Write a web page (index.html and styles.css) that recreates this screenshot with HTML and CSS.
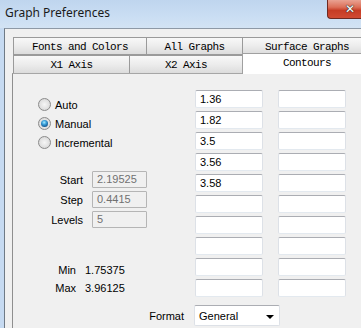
FILE: index.html
```html
<!DOCTYPE html>
<html>
<head>
<meta charset="utf-8">
<link rel="stylesheet" href="styles.css">
</head>
<body>
<div class="window">
  <div class="titlebar">
    <span class="title">Graph Preferences</span>
    <div class="close"><span class="close-x">✕</span></div>
  </div>
  <div class="client">
    <div class="tabs">
      <div class="tab-row back">
        <div class="tab t-fonts">Fonts and Colors</div>
        <div class="tab t-all">All Graphs</div>
        <div class="tab t-surface">Surface Graphs</div>
      </div>
      <div class="tab-row front">
        <div class="tab t-x1">X1 Axis</div>
        <div class="tab t-x2">X2 Axis</div>
        <div class="tab t-contours active">Contours</div>
      </div>
    </div>
    <div class="panel">
      <div class="panel-body">
        <div class="left">
          <div class="radios">
            <div class="radio-row"><span class="radio"></span><span>Auto</span></div>
            <div class="radio-row"><span class="radio checked"></span><span>Manual</span></div>
            <div class="radio-row"><span class="radio"></span><span>Incremental</span></div>
          </div>
          <div class="fields">
            <div class="field"><span class="flabel">Start</span><span class="dbox">2.19525</span></div>
            <div class="field"><span class="flabel">Step</span><span class="dbox">0.4415</span></div>
            <div class="field"><span class="flabel">Levels</span><span class="dbox">5</span></div>
          </div>
          <div class="stats">
            <div class="stat"><span class="slabel">Min</span><span>1.75375</span></div>
            <div class="stat"><span class="slabel">Max</span><span>3.96125</span></div>
          </div>
        </div>
        <div class="inputs">
          <div class="box">1.36</div><div class="box"></div>
          <div class="box">1.82</div><div class="box"></div>
          <div class="box">3.5</div><div class="box"></div>
          <div class="box">3.56</div><div class="box"></div>
          <div class="box">3.58</div><div class="box"></div>
          <div class="box"></div><div class="box"></div>
          <div class="box"></div><div class="box"></div>
          <div class="box"></div><div class="box"></div>
          <div class="box"></div><div class="box"></div>
          <div class="box"></div><div class="box"></div>
        </div>
      </div>
      <div class="format-row">
        <span class="format-label">Format</span>
        <div class="select"><span>General</span><span class="arrow"></span></div>
      </div>
    </div>
  </div>
</div>
</body>
</html>
```
FILE: styles.css
```css
html, body {
  margin: 0;
  padding: 0;
}
body {
  width: 361px;
  height: 328px;
  overflow: hidden;
  background: #c6daf1;
  font-family: "Liberation Sans", Arial, sans-serif;
  font-size: 11px;
  color: #000;
}
.window {
  width: 361px;
  height: 328px;
  overflow: hidden;
  display: flex;
  flex-direction: column;
}
.titlebar {
  height: 28px;
  flex: none;
  display: flex;
  align-items: flex-start;
  background: linear-gradient(180deg, #bfd5ee 0%, #cadef3 60%, #d3e3f4 100%);
}
.title {
  flex: 1;
  font-family: "Noto Sans", "Open Sans", sans-serif;
  font-size: 12px;
  color: #1a1a1a;
  padding: 5px 0 0 5px;
  line-height: 16px;
}
.close {
  width: 34px;
  height: 19px;
  flex: none;
  box-sizing: border-box;
  border-left: 1px solid #6e2a22;
  border-bottom: 1px solid #6e2a22;
  border-radius: 0 0 0 4px;
  background-color: #d05a43;
  background-image: linear-gradient(180deg, #e9a292 0%, #dc6f58 40%, #c63c25 58%, #d04b33 100%);
  display: flex;
  align-items: center;
  padding-left: 17px;
}
.close-x {
  font-family: "DejaVu Sans", sans-serif;
  font-size: 12px;
  font-weight: bold;
  line-height: 12px;
  color: #ffffff;
  text-shadow: 0 0 1px #333, 0 0 1px #333, 0 0 1px #333;
}
.client {
  flex: 1;
  margin-left: 4px;
  border-left: 1px solid #6f7a86;
  border-top: 1px solid #8e99a6;
  background: #f0f0f0;
  padding: 8px 0 0 7px;
  display: flex;
  flex-direction: column;
  min-height: 0;
}
.tabs {
  display: flex;
  flex-direction: column;
  margin-left: 1px;
}
.tab-row {
  display: flex;
  height: 18px;
  align-items: flex-end;
}
.tab {
  box-sizing: border-box;
  height: 18px;
  flex: none;
  border: 1px solid #9a9a9a;
  background: linear-gradient(180deg, #f8f8f8 0%, #ececec 50%, #dcdcdc 100%);
  font-family: "Liberation Mono", "Courier New", monospace;
  font-size: 11px;
  letter-spacing: -0.6px;
  text-align: center;
  line-height: 18px;
  white-space: nowrap;
  color: #000;
}
.tab + .tab {
  margin-left: -1px;
}
.t-fonts { width: 134px; }
.t-all { width: 97px; }
.t-surface { width: 130px; }
.t-x1 { width: 117px; }
.t-x2 { width: 114px; }
.front .tab {
  border-bottom: none;
}
.tab.active {
  width: 130px;
  height: 21px;
  margin-bottom: -1px;
  background: #ffffff;
  line-height: 19px;
  position: relative;
  z-index: 2;
  border-color: #a0a0a0;
}
.panel {
  flex: 1;
  border-top: 1px solid #a6a6a6;
  border-left: 1px solid #8f8f8f;
  background: #f0f0f0;
  padding-top: 16px;
  display: flex;
  flex-direction: column;
}
.panel-body {
  display: grid;
  grid-template-columns: 182px auto;
}
.left {
  display: flex;
  flex-direction: column;
}
.radios {
  margin-top: 5px;
  display: flex;
  flex-direction: column;
}
.radio-row {
  height: 19px;
  display: flex;
  align-items: center;
  padding-left: 25px;
  gap: 4px;
}
.radio {
  width: 13px;
  height: 13px;
  box-sizing: border-box;
  border-radius: 50%;
  border: 1px solid #8b8b8b;
  background: radial-gradient(circle at 50% 50%, #f6f6f6 0%, #e4e4e4 50%, #cfcfcf 100%);
  display: flex;
  align-items: center;
  justify-content: center;
}
.radio.checked::after {
  content: "";
  width: 7px;
  height: 7px;
  border-radius: 50%;
  background: radial-gradient(circle at 45% 35%, #a8ecff 0%, #3aa0da 35%, #15578f 75%, #0e3f6b 100%);
}
.fields {
  margin-top: 19px;
  display: flex;
  flex-direction: column;
  gap: 3px;
}
.field {
  height: 17px;
  display: flex;
  align-items: center;
  gap: 9px;
}
.flabel {
  width: 70px;
  text-align: right;
}
.dbox {
  box-sizing: border-box;
  width: 55px;
  height: 17px;
  border: 1px solid #b5b5b5;
  border-radius: 1px;
  background: #f0f0f0;
  color: #707070;
  padding-left: 4px;
  line-height: 15px;
}
.stats {
  margin-top: 33px;
  display: flex;
  flex-direction: column;
}
.stat {
  height: 18px;
  display: flex;
  align-items: center;
  gap: 9px;
}
.slabel {
  width: 63px;
  text-align: right;
}
.inputs {
  display: grid;
  grid-template-columns: 68px 68px;
  grid-auto-rows: 18px;
  column-gap: 15px;
  row-gap: 3px;
}
.box {
  box-sizing: border-box;
  height: 18px;
  background: #ffffff;
  border: 1px solid #dde1e7;
  border-top-color: #abadb3;
  border-bottom-color: #e3e9ef;
  border-radius: 2px;
  padding-left: 4px;
  line-height: 16px;
}
.format-row {
  margin-top: 8px;
  display: flex;
  align-items: center;
  gap: 10px;
}
.format-label {
  width: 171px;
  text-align: right;
}
.select {
  box-sizing: border-box;
  width: 86px;
  height: 21px;
  background: #ffffff;
  border: 1px solid #dde1e7;
  border-top-color: #abadb3;
  border-radius: 2px;
  display: flex;
  align-items: center;
  justify-content: space-between;
  padding: 0 5px 0 4px;
}
.arrow {
  width: 0;
  height: 0;
  border-left: 4px solid transparent;
  border-right: 4px solid transparent;
  border-top: 4px solid #000;
  margin-top: 2px;
}
```
